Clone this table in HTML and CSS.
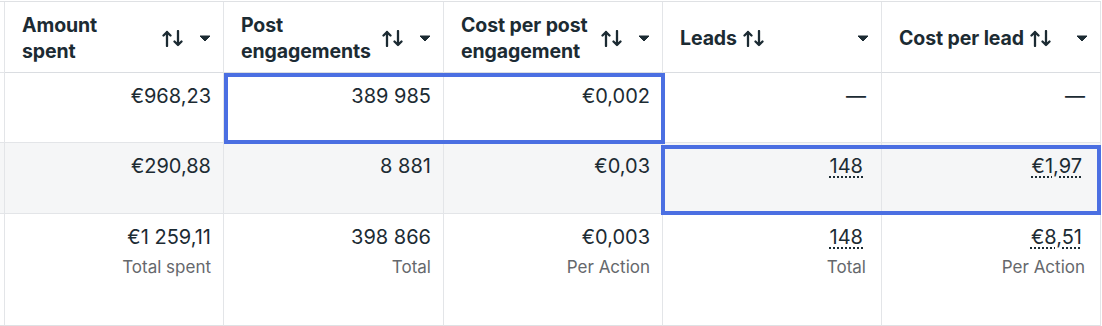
FILE: index.html
```html
<!DOCTYPE html>
<html>
<head>
<meta charset="utf-8">
<link rel="stylesheet" href="styles.css">
</head>
<body>
<div class="grid">
  <div class="row r1">
    <div class="cell edge"></div>
    <div class="cell head">
      <span class="label wrap">Amount<br>spent</span>
      <svg class="sort" viewBox="0 0 22 17"><path d="M5 16V2M1.5 5.5L5 2l3.5 3.5M16 1v14M12.5 11.5L16 15l3.5-3.5"/></svg>
      <svg class="caret" viewBox="0 0 12 7"><path d="M1 1h10L6 6z"/></svg>
    </div>
    <div class="cell head">
      <span class="label wrap">Post<br>engagements</span>
      <svg class="sort" viewBox="0 0 22 17"><path d="M5 16V2M1.5 5.5L5 2l3.5 3.5M16 1v14M12.5 11.5L16 15l3.5-3.5"/></svg>
      <svg class="caret" viewBox="0 0 12 7"><path d="M1 1h10L6 6z"/></svg>
    </div>
    <div class="cell head">
      <span class="label wrap">Cost per post<br>engagement</span>
      <svg class="sort" viewBox="0 0 22 17"><path d="M5 16V2M1.5 5.5L5 2l3.5 3.5M16 1v14M12.5 11.5L16 15l3.5-3.5"/></svg>
      <svg class="caret" viewBox="0 0 12 7"><path d="M1 1h10L6 6z"/></svg>
    </div>
    <div class="cell head">
      <span class="label">Leads</span>
      <svg class="sort" viewBox="0 0 22 17"><path d="M5 16V2M1.5 5.5L5 2l3.5 3.5M16 1v14M12.5 11.5L16 15l3.5-3.5"/></svg>
      <svg class="caret push" viewBox="0 0 12 7"><path d="M1 1h10L6 6z"/></svg>
    </div>
    <div class="cell head">
      <span class="label">Cost per lead</span>
      <svg class="sort" viewBox="0 0 22 17"><path d="M5 16V2M1.5 5.5L5 2l3.5 3.5M16 1v14M12.5 11.5L16 15l3.5-3.5"/></svg>
      <svg class="caret push" viewBox="0 0 12 7"><path d="M1 1h10L6 6z"/></svg>
    </div>
  </div>

  <div class="row r2">
    <div class="cell edge"></div>
    <div class="cell num">€968,23</div>
    <div class="cell num">389 985</div>
    <div class="cell num">€0,002</div>
    <div class="cell num wide">—</div>
    <div class="cell num wide">—</div>
  </div>

  <div class="row r3">
    <div class="cell edge alt"></div>
    <div class="cell num alt">€290,88</div>
    <div class="cell num alt">8 881</div>
    <div class="cell num alt">€0,03</div>
    <div class="cell num alt wide"><span class="dot">148</span></div>
    <div class="cell num alt wide"><span class="dot">€1,97</span></div>
  </div>

  <div class="row r4">
    <div class="cell edge last"></div>
    <div class="cell num last">€1 259,11<span class="sub">Total spent</span></div>
    <div class="cell num last">398 866<span class="sub">Total</span></div>
    <div class="cell num last">€0,003<span class="sub">Per Action</span></div>
    <div class="cell num last wide"><span class="dot">148</span><span class="sub">Total</span></div>
    <div class="cell num last wide"><span class="dot">€8,51</span><span class="sub">Per Action</span></div>
  </div>

  <div class="sel sel-a"></div>
  <div class="sel sel-b"></div>
</div>
</body>
</html>
```

FILE: styles.css
```css
html, body {
  margin: 0;
  padding: 0;
  background: #ffffff;
}

body {
  font-family: Inter, "Noto Sans", sans-serif;
  color: #1c2b33;
}

.grid {
  margin-top: 1px;
  border-top: 1px solid #dfe1e4;
  display: grid;
  grid-template-columns: 5px 219px 220px 219px 219px 219px;
  grid-template-rows: 71px 70px 71px 112px;
  width: 1101px;
}

.row {
  display: contents;
}

.r1 > .cell { grid-row: 1; }
.r2 > .cell { grid-row: 2; }
.r3 > .cell { grid-row: 3; }
.r4 > .cell { grid-row: 4; }

.row > .cell:nth-child(1) { grid-column: 1; }
.row > .cell:nth-child(2) { grid-column: 2; }
.row > .cell:nth-child(3) { grid-column: 3; }
.row > .cell:nth-child(4) { grid-column: 4; }
.row > .cell:nth-child(5) { grid-column: 5; }
.row > .cell:nth-child(6) { grid-column: 6; }

.cell {
  box-sizing: border-box;
  border-right: 1px solid #e3e5e8;
  border-bottom: 1px solid #e3e5e8;
  background: #ffffff;
}

.alt {
  background: #f5f6f7;
}

.last {
  border-bottom-color: #dfe1e4;
}

.head {
  display: flex;
  align-items: center;
  padding: 2px 12px 0 17px;
  border-bottom-color: #dadde1;
}

.label {
  font-weight: 700;
  font-size: 19.5px;
  line-height: 26px;
  letter-spacing: -0.1px;
  white-space: nowrap;
}

.label.wrap {
  flex: 1 1 auto;
}

.sort {
  flex: none;
  width: 22px;
  height: 17px;
  margin-left: 6px;
  fill: none;
  stroke: #1c2b33;
  stroke-width: 2.3;
  stroke-linecap: round;
  stroke-linejoin: round;
}

.caret {
  flex: none;
  width: 12px;
  height: 7px;
  margin-left: 15px;
  fill: #1c2b33;
  stroke: #1c2b33;
  stroke-width: 1;
  stroke-linejoin: round;
}

.caret.push {
  margin-left: auto;
}

.num {
  display: flex;
  flex-direction: column;
  align-items: flex-end;
  padding: 11px 12px 0 12px;
  font-size: 20px;
  line-height: 24px;
}

.num.wide {
  padding-right: 15px;
}

.num.last {
  padding-top: 11px;
}

.dot {
  margin-right: 3px;
  text-decoration: underline dotted #1c2b33;
  text-decoration-thickness: 1.5px;
  text-underline-offset: 3px;
}

.sub {
  margin-top: 6px;
  font-size: 17px;
  line-height: 24px;
  color: #65686c;
}

.sel {
  box-sizing: border-box;
  border: 4px solid #4b6fe2;
  z-index: 2;
  pointer-events: none;
}

.sel-a {
  grid-column: 3 / 5;
  grid-row: 2;
  margin: 0 -2px -1px 0;
}

.sel-b {
  grid-column: 5 / 7;
  grid-row: 3;
  margin: 2px 0 -1px -2px;
}
```
